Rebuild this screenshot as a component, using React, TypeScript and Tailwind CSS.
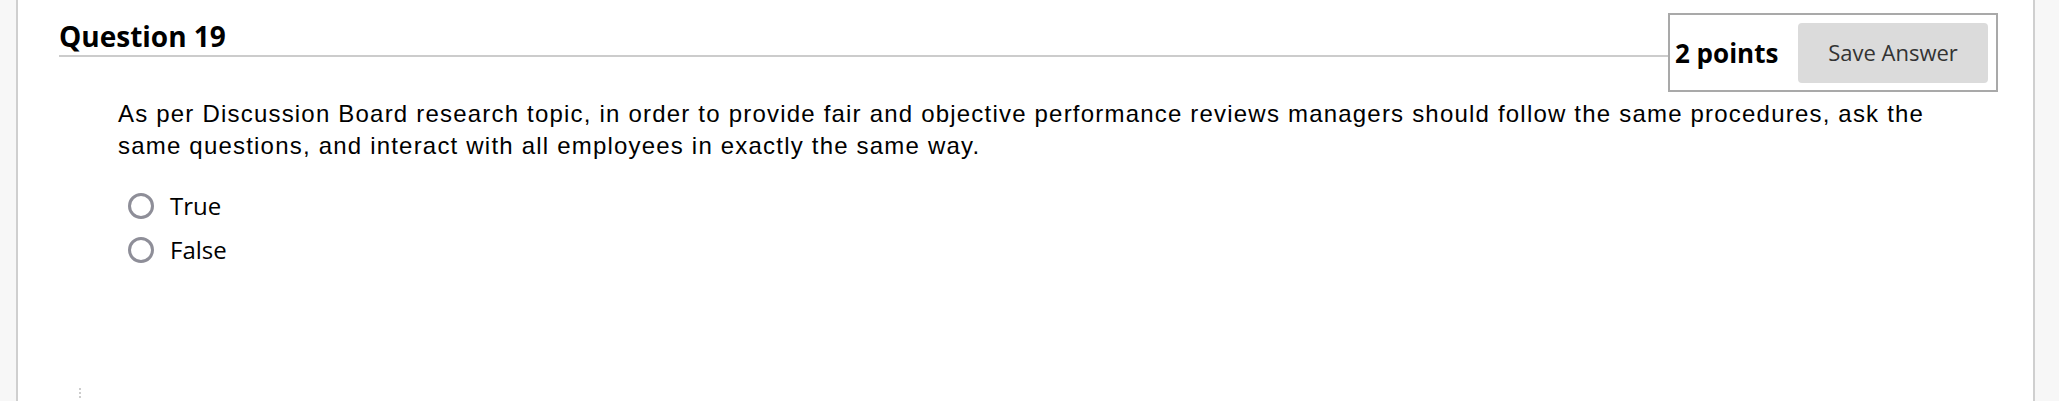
const openSans = { fontFamily: '"Open Sans", "Noto Sans", sans-serif' }

type Choice = { id: string; label: string }

const CHOICES: Choice[] = [
  { id: 'true', label: 'True' },
  { id: 'false', label: 'False' },
]

function PointsBox() {
  return (
    <div className="mr-[35px] flex h-[79px] w-[330px] shrink-0 items-center border-2 border-[#a9a9a9] pl-[5px] pr-[8px]">
      <span className="text-[26px] leading-none font-bold text-black" style={openSans}>
        2 points
      </span>
      <button
        type="button"
        className="ml-auto flex h-[60px] w-[190px] items-center justify-center rounded-[4px] bg-[#dbdbdb] text-[22px] text-[#333333]"
        style={openSans}
      >
        Save Answer
      </button>
    </div>
  )
}

export default function App() {
  return (
    <div className="flex h-screen w-full bg-[#f7f7f7]">
      <div className="w-[16px] shrink-0" />
      <section className="flex flex-1 flex-col border-x-2 border-[#cfcfcf] bg-white">
        <header className="flex items-start pt-[13px] pl-[41px]">
          <h2
            className="mt-[4px] h-[40px] flex-1 border-b-2 border-[#cccccc] text-[28px] leading-[38px] font-bold text-black"
            style={openSans}
          >
            Question 19
          </h2>
          <PointsBox />
        </header>

        <div className="pt-[6px] pl-[100px] pr-[60px]">
          <p
            className="text-[24px] leading-[32px] tracking-[1.2px] text-black"
            style={{ fontFamily: '"Liberation Sans", Arial, sans-serif' }}
          >
            As per Discussion Board research topic, in order to provide fair and objective performance reviews managers
            should follow the same procedures, ask the same questions, and interact with all employees in exactly the
            same way.
          </p>

          <ul className="mt-[31px] flex flex-col gap-[18px] pl-[10px]">
            {CHOICES.map((c) => (
              <li key={c.id} className="flex items-center gap-[16px]">
                <span className="h-[26px] w-[26px] rounded-full border-[3.5px] border-[#8e8e98] bg-white" />
                <span className="text-[24px] leading-[26px] text-black" style={openSans}>
                  {c.label}
                </span>
              </li>
            ))}
          </ul>
        </div>

        <div className="mt-auto flex flex-col gap-[2px] pb-[3px] pl-[61px]">
          <span className="h-[2px] w-[2px] rounded-full bg-[#bdbdbd]" />
          <span className="h-[2px] w-[2px] rounded-full bg-[#bdbdbd]" />
          <span className="h-[2px] w-[2px] rounded-full bg-[#bdbdbd]" />
        </div>
      </section>
      <div className="w-[24px] shrink-0" />
    </div>
  )
}
